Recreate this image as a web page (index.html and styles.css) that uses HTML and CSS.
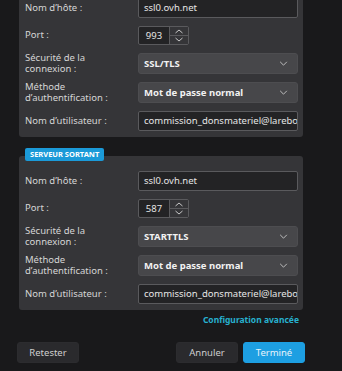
FILE: index.html
```html
<!DOCTYPE html>
<html lang="fr">
<head>
<meta charset="utf-8">
<link rel="stylesheet" href="styles.css">
</head>
<body>
<div class="page">
  <section class="panel panel-top">
    <div class="row">
      <div class="label">Nom d’hôte :</div>
      <div class="field"><div class="input">ssl0.ovh.net</div></div>
    </div>
    <div class="row">
      <div class="label">Port :</div>
      <div class="field"><div class="port"><span class="num">993</span><span class="spin"><svg viewBox="0 0 18 17" width="18" height="17"><path d="M5.5 6 L9 3 L12.5 6" /><path d="M5.5 11 L9 14 L12.5 11" /><line x1="0" y1="8.5" x2="18" y2="8.5" class="sep"/></svg></span></div></div>
    </div>
    <div class="row">
      <div class="label">Sécurité de la<br>connexion :</div>
      <div class="field"><div class="select"><span>SSL/TLS</span><svg viewBox="0 0 10 6" width="9" height="5"><path d="M1 1 L5 5 L9 1"/></svg></div></div>
    </div>
    <div class="row">
      <div class="label">Méthode<br>d’authentification :</div>
      <div class="field"><div class="select"><span>Mot de passe normal</span><svg viewBox="0 0 10 6" width="9" height="5"><path d="M1 1 L5 5 L9 1"/></svg></div></div>
    </div>
    <div class="row">
      <div class="label">Nom d’utilisateur :</div>
      <div class="field"><div class="input">commission_donsmateriel@larebours</div></div>
    </div>
  </section>

  <section class="panel panel-out">
    <div class="badge">SERVEUR SORTANT</div>
    <div class="row">
      <div class="label">Nom d’hôte :</div>
      <div class="field"><div class="input">ssl0.ovh.net</div></div>
    </div>
    <div class="row">
      <div class="label">Port :</div>
      <div class="field"><div class="port"><span class="num">587</span><span class="spin"><svg viewBox="0 0 18 17" width="18" height="17"><path d="M5.5 6 L9 3 L12.5 6" /><path d="M5.5 11 L9 14 L12.5 11" /><line x1="0" y1="8.5" x2="18" y2="8.5" class="sep"/></svg></span></div></div>
    </div>
    <div class="row">
      <div class="label">Sécurité de la<br>connexion :</div>
      <div class="field"><div class="select"><span>STARTTLS</span><svg viewBox="0 0 10 6" width="9" height="5"><path d="M1 1 L5 5 L9 1"/></svg></div></div>
    </div>
    <div class="row">
      <div class="label">Méthode<br>d’authentification :</div>
      <div class="field"><div class="select"><span>Mot de passe normal</span><svg viewBox="0 0 10 6" width="9" height="5"><path d="M1 1 L5 5 L9 1"/></svg></div></div>
    </div>
    <div class="row">
      <div class="label">Nom d’utilisateur :</div>
      <div class="field"><div class="input">commission_donsmateriel@larebours</div></div>
    </div>
  </section>

  <div class="advanced"><a class="link">Configuration avancée</a></div>

  <div class="buttons">
    <button class="btn">Retester</button>
    <span class="spacer"></span>
    <button class="btn">Annuler</button>
    <button class="btn primary">Terminé</button>
  </div>
</div>
</body>
</html>
```

FILE: styles.css
```css
html, body {
  margin: 0;
  padding: 0;
  background: #19191b;
  height: 100%;
  overflow: hidden;
}
body {
  font-family: "Noto Sans", "DejaVu Sans", sans-serif;
  font-size: 9px;
  color: #d9d9d9;
}
.page {
  width: 342px;
  padding: 0 0 0 19px;
  box-sizing: border-box;
}
.panel {
  position: relative;
  width: 284px;
  background: #353538;
  border-radius: 3px;
  box-sizing: border-box;
  padding: 0 5px 6px 6px;
  display: flex;
  flex-direction: column;
  gap: 8px;
}
.panel-top {
  margin-top: -10px;
  padding-top: 8px;
}
.panel-out {
  margin-top: 19px;
  padding-top: 15px;
  padding-bottom: 6px;
}
.row {
  display: flex;
  align-items: center;
}
.label {
  width: 113px;
  line-height: 10.5px;
  font-size: 9.5px;
  color: #d6d6d6;
}
.field {
  width: 160px;
}
.input {
  height: 20px;
  box-sizing: border-box;
  border: 1px solid #5a5a5d;
  border-radius: 2px;
  background: #232325;
  color: #e6e6e6;
  padding: 0 5px;
  line-height: 18px;
  white-space: nowrap;
  overflow: hidden;
  font-size: 9.5px;
}
.port {
  display: flex;
  width: 51px;
  height: 19px;
  box-sizing: border-box;
  border: 1px solid #5a5a5d;
  border-radius: 2px;
  background: #232325;
}
.port .num {
  width: 30px;
  text-align: center;
  line-height: 17px;
  color: #e6e6e6;
  font-size: 9.5px;
  border-right: 1px solid #5a5a5d;
}
.port .spin {
  flex: 1;
  display: flex;
  background: #353538;
}
.port svg path {
  fill: none;
  stroke: #c8c8c8;
  stroke-width: 1;
}
.port svg .sep {
  stroke: #5a5a5d;
  stroke-width: 1;
}
.select {
  height: 21px;
  box-sizing: border-box;
  border-radius: 3px;
  background: #47474a;
  border: 1px solid #4d4d50;
  display: flex;
  align-items: center;
  justify-content: space-between;
  padding: 0 9px 0 5px;
  font-weight: bold;
  color: #f2f2f2;
  font-size: 9.5px;
}
.select svg path {
  fill: none;
  stroke: #bdbdbd;
  stroke-width: 1.2;
}
.badge {
  position: absolute;
  left: 6px;
  top: -8px;
  height: 13px;
  line-height: 13px;
  padding: 0 5px;
  background: #1b9ad8;
  color: #ffffff;
  font-weight: bold;
  font-size: 7.5px;
  border-radius: 2px;
}
.advanced {
  width: 280px;
  display: flex;
  justify-content: flex-end;
  margin-top: 4px;
}
.link {
  color: #27b1cf;
  font-weight: bold;
  font-size: 8.5px;
}
.buttons {
  display: flex;
  gap: 5px;
  margin-left: -2px;
  width: 288px;
  margin-top: 17px;
}
.spacer {
  flex: 1;
}
.btn {
  width: 62px;
  height: 21px;
  border-radius: 3px;
  border: 1px solid #2c2c2f;
  background: #2a2a2d;
  color: #cfcfcf;
  font-family: "Noto Sans", "DejaVu Sans", sans-serif;
  font-size: 9.5px;
  padding: 0;
}
.btn.primary {
  background: #1d9fe2;
  border-color: #1d9fe2;
  color: #e8f4fb;
}
```
